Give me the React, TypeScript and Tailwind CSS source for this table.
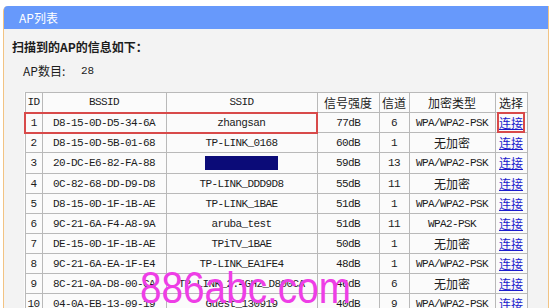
import React from "react";

type Row = {
  id: number;
  bssid: string;
  ssid: string;
  signal: string;
  channel: number;
  security: string;
};

const rows: Row[] = [
  { id: 1, bssid: "D8-15-0D-D5-34-6A", ssid: "zhangsan", signal: "77dB", channel: 6, security: "WPA/WPA2-PSK" },
  { id: 2, bssid: "D8-15-0D-5B-01-68", ssid: "TP-LINK_0168", signal: "60dB", channel: 1, security: "无加密" },
  { id: 3, bssid: "20-DC-E6-82-FA-88", ssid: "", signal: "59dB", channel: 13, security: "WPA/WPA2-PSK" },
  { id: 4, bssid: "0C-82-68-DD-D9-D8", ssid: "TP-LINK_DDD9D8", signal: "55dB", channel: 11, security: "无加密" },
  { id: 5, bssid: "D8-15-0D-1F-1B-AE", ssid: "TP-LINK_1BAE", signal: "51dB", channel: 1, security: "WPA/WPA2-PSK" },
  { id: 6, bssid: "9C-21-6A-F4-A8-9A", ssid: "aruba_test", signal: "51dB", channel: 11, security: "WPA2-PSK" },
  { id: 7, bssid: "DE-15-0D-1F-1B-AE", ssid: "TPiTV_1BAE", signal: "50dB", channel: 1, security: "无加密" },
  { id: 8, bssid: "9C-21-6A-EA-1F-E4", ssid: "TP-LINK_EA1FE4", signal: "48dB", channel: 1, security: "WPA/WPA2-PSK" },
  { id: 9, bssid: "8C-21-0A-D8-00-CA", ssid: "TP-LINK_2.4GHz_D800CA", signal: "46dB", channel: 6, security: "无加密" },
  { id: 10, bssid: "04-0A-EB-13-09-19", ssid: "Guest_130919", signal: "40dB", channel: 9, security: "WPA/WPA2-PSK" },
];

const mono = "font-['Liberation_Mono','Noto_Sans_CJK_SC',monospace] text-[11px] tracking-[-0.6px]";
const cjk = "font-['Noto_Sans_CJK_SC',sans-serif] text-[12px]";
const cell = "border border-[#b9b9b9] p-0 h-[20px] leading-[18px] text-center";
const red = "border-y-2 border-y-[#d84a4a]";

export default function App() {
  return (
    <div className="relative h-[308px] w-[556px] overflow-hidden bg-white pt-[6px] pl-[3px] text-[#1c1c1c]">
      <div className="w-[546px] h-[320px] rounded-tl-[5px] border-l border-r border-[#f2c383] bg-[#f3f3f3]">
        {/* header bar */}
        <div className="h-[23px] rounded-tl-[4px] bg-[#6799fb] pl-[15px] text-white leading-[23px] font-['Noto_Sans_CJK_SC',sans-serif] text-[12px]">
          AP列表
        </div>

        <div className="pl-[8px] pt-[9px] font-['Noto_Sans_CJK_SC',sans-serif] text-[12px] font-bold leading-[18px]">
          扫描到的AP的信息如下：
        </div>
        <div className="flex pl-[19px] pt-[6px] font-['Noto_Sans_CJK_SC',sans-serif] text-[12px] leading-[18px]">
          <span className="w-[58px]">AP数目:</span>
          <span className="font-['Liberation_Mono',monospace] text-[11px]">28</span>
        </div>

        <table className="ml-[20px] mt-[12px] border-collapse bg-[#fbfbfb]">
          <colgroup>
            <col className="w-[17px]" />
            <col className="w-[124px]" />
            <col className="w-[151px]" />
            <col className="w-[62px]" />
            <col className="w-[30px]" />
            <col className="w-[86px]" />
            <col className="w-[32px]" />
          </colgroup>
          <thead>
            <tr>
              <th className={`${cell} ${mono} font-normal`}>ID</th>
              <th className={`${cell} ${mono} font-normal`}>BSSID</th>
              <th className={`${cell} ${mono} font-normal`}>SSID</th>
              <th className={`${cell} ${cjk} font-normal`}>信号强度</th>
              <th className={`${cell} ${cjk} font-normal`}>信道</th>
              <th className={`${cell} ${cjk} font-normal`}>加密类型</th>
              <th className={`${cell} ${cjk} font-normal`}>选择</th>
            </tr>
          </thead>
          <tbody>
            {rows.map((r) => {
              const first = r.id === 1;
              return (
                <tr key={r.id}>
                  <td className={`${cell} ${mono} ${first ? `${red} border-l-2 border-l-[#d84a4a]` : ""}`}>{r.id}</td>
                  <td className={`${cell} ${mono} ${first ? red : ""}`}>{r.bssid}</td>
                  <td className={`${cell} ${mono} ${first ? `${red} border-r-2 border-r-[#d84a4a]` : ""}`}>
                    {r.id === 3 ? (
                      <span className="inline-block h-[14px] w-[73px] translate-y-[3px] bg-[#0b0b78]" />
                    ) : (
                      r.ssid
                    )}
                  </td>
                  <td className={`${cell} ${mono}`}>{r.signal}</td>
                  <td className={`${cell} ${mono}`}>{r.channel}</td>
                  <td className={`${cell} ${r.security === "无加密" ? cjk : mono}`}>{r.security}</td>
                  <td className={`${cell} ${cjk}`}>
                    <a
                      href="#"
                      className={`text-[#1a1acc] underline ${first ? "outline-2 outline-[#d84a4a]" : ""}`}
                    >
                      连接
                    </a>
                  </td>
                </tr>
              );
            })}
          </tbody>
        </table>
      </div>

      {/* watermark */}
      <div className="pointer-events-none absolute left-[140px] top-[266px] origin-left scale-x-[0.88] font-['Liberation_Sans',Arial,sans-serif] text-[44px] leading-[44px] text-[#ee3ee6]">
        886abc.com
      </div>
    </div>
  );
}
